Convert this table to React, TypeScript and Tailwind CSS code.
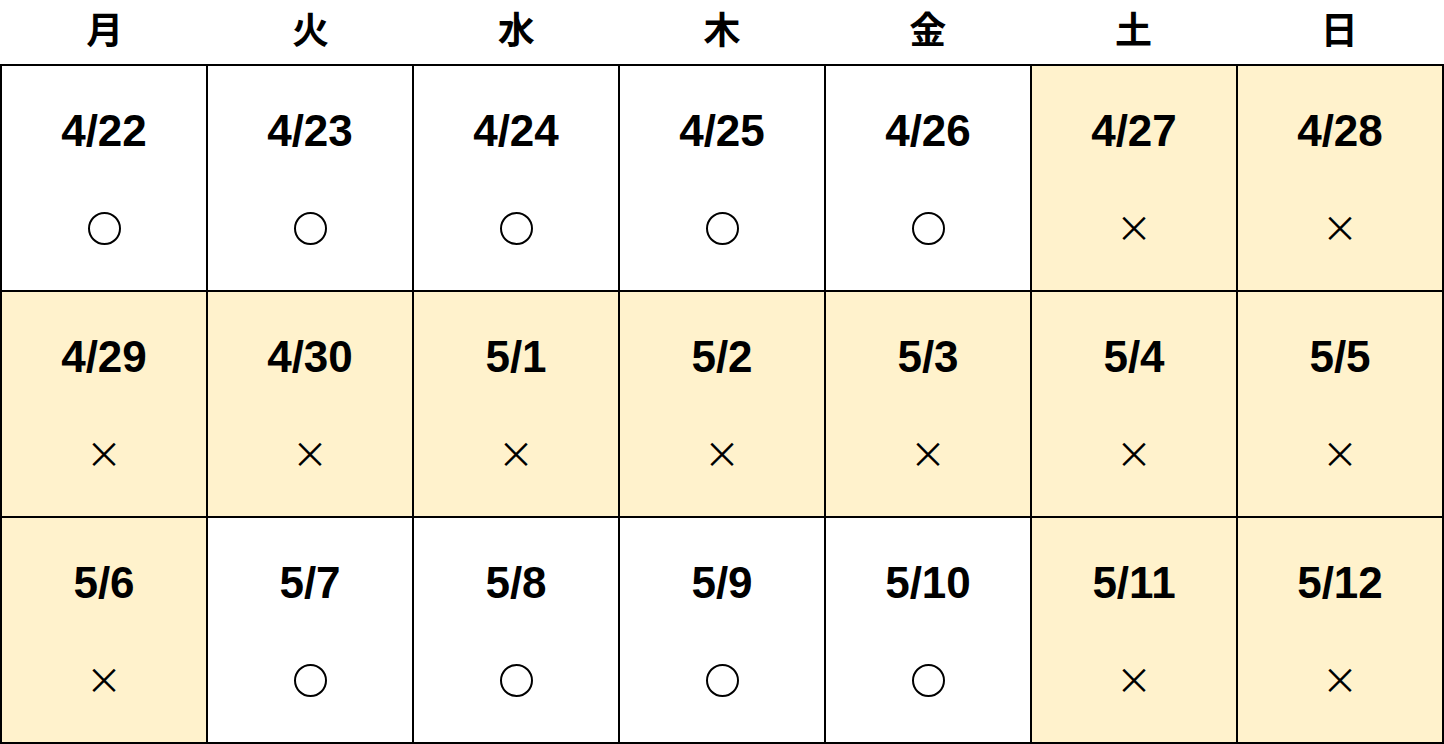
const days = ['月', '火', '水', '木', '金', '土', '日']

const cells = [
  { date: '4/22', open: true },
  { date: '4/23', open: true },
  { date: '4/24', open: true },
  { date: '4/25', open: true },
  { date: '4/26', open: true },
  { date: '4/27', open: false },
  { date: '4/28', open: false },
  { date: '4/29', open: false },
  { date: '4/30', open: false },
  { date: '5/1', open: false },
  { date: '5/2', open: false },
  { date: '5/3', open: false },
  { date: '5/4', open: false },
  { date: '5/5', open: false },
  { date: '5/6', open: false },
  { date: '5/7', open: true },
  { date: '5/8', open: true },
  { date: '5/9', open: true },
  { date: '5/10', open: true },
  { date: '5/11', open: false },
  { date: '5/12', open: false },
]

export default function App() {
  return (
    <div className="h-[744px] w-[1444px] overflow-hidden bg-white text-black">
      {/* weekday header */}
      <div className="grid h-16 grid-cols-7 px-[2px]">
        {days.map((d) => (
          <div
            key={d}
            className="flex items-center justify-center pb-[7px] font-['Noto_Sans_CJK_JP',sans-serif] text-[37px] font-bold leading-none"
          >
            {d}
          </div>
        ))}
      </div>

      {/* calendar grid */}
      <div className="grid grid-cols-7 gap-[2px] bg-black p-[2px]">
        {cells.map((c) => (
          <div
            key={c.date}
            className={`flex h-[224px] flex-col items-center pt-[43px] ${
              c.open ? 'bg-white' : 'bg-[#fff2cc]'
            }`}
          >
            <span className="h-[44px] font-['Liberation_Sans',Arial,sans-serif] text-[44px] font-bold leading-none">
              {c.date}
            </span>
            <span className="mt-[55px] flex h-10 items-center justify-center">
              {c.open ? (
                <span className="block h-[33px] w-[33px] rounded-full border-2 border-black" />
              ) : (
                <span className="-mt-[4px] font-['Noto_Sans_CJK_JP',sans-serif] text-[36px] leading-none">×</span>
              )}
            </span>
          </div>
        ))}
      </div>
    </div>
  )
}
